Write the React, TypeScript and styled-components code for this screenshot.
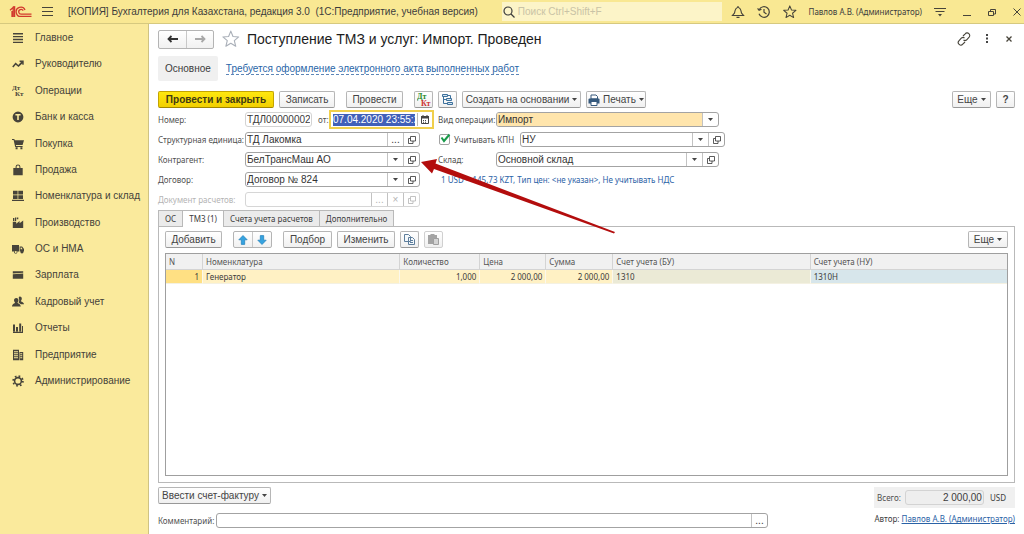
import React, { ReactNode } from "react";
import styled, { createGlobalStyle, css } from "styled-components";

const GlobalStyle = createGlobalStyle`
  *, *::before, *::after { box-sizing: border-box; }
  body {
    margin: 0;
    background: #fff;
    color: #3c3c3c;
    font-family: "Liberation Sans", Arial, sans-serif;
    font-size: 10px;
    line-height: 12px;
  }
  button, input { font: inherit; color: inherit; margin: 0; }
  button { cursor: pointer; }
`;

const small = css`
  font-family: "Noto Sans", "Liberation Sans", sans-serif;
  font-size: 8px;
`;

/* ---------- window frame ---------- */

const Page = styled.div`
  display: flex;
  flex-direction: column;
  min-height: 100vh;
`;

const TopBar = styled.header`
  display: flex;
  align-items: center;
  height: 24px;
  padding: 0 1px 0 9px;
  background: #f9e893;
  border-bottom: 1px solid #d6c97f;
`;

const AppTitle = styled.span`
  flex: none;
  margin-left: 15px;
  white-space: pre;
`;

const SearchBox = styled.label`
  display: flex;
  align-items: center;
  gap: 3px;
  flex: 1;
  min-width: 60px;
  height: 19px;
  margin: 0 9px 0 24px;
  padding-left: 1px;
  background: #fcf4c8;
`;

const SearchInput = styled.input`
  flex: 1;
  min-width: 0;
  padding: 0;
  border: 0;
  outline: 0;
  background: transparent;
  &::placeholder { color: #c9c3a6; opacity: 1; }
`;

const TopActions = styled.div`
  display: flex;
  align-items: center;
  gap: 12px;
`;

const IconButton = styled.button`
  display: flex;
  flex: none;
  padding: 0;
  border: 0;
  background: none;
  color: #47443a;
`;

const UserName = styled.span`
  ${small}
  white-space: nowrap;
`;

const WindowButtons = styled.div`
  display: flex;
  align-items: center;
  gap: 13px;
  margin-left: 3px;
`;

const Body = styled.div`
  display: flex;
  flex: 1;
`;

const Sidebar = styled.nav`
  flex: none;
  width: 149px;
  background: #faea9c;
  border-right: 1px solid #cfc383;
`;

const MenuList = styled.ul`
  display: flex;
  flex-direction: column;
  justify-content: space-between;
  min-height: 365px;
  margin: 0;
  padding: 6px 0 0;
  list-style: none;
`;

const MenuLink = styled.a`
  display: flex;
  align-items: center;
  gap: 11px;
  height: 16px;
  padding-left: 12px;
  color: #45423a;
  text-decoration: none;
  white-space: nowrap;
`;

/* ---------- document form ---------- */

const Main = styled.main`
  display: flex;
  flex: 1;
  flex-direction: column;
  min-width: 0;
  padding: 5px 9px 6px;
`;

const TitleRow = styled.div`
  display: flex;
  align-items: center;
  height: 20px;
`;

const SplitButtons = styled.div`
  display: flex;
  border: 1px solid #b4b4b4;
  border-radius: 2px;
  background: linear-gradient(#fff, #f1f1f1);
`;

const SplitHalf = styled.button<{ $w: number; $h: number }>`
  display: flex;
  align-items: center;
  justify-content: center;
  width: ${(p) => p.$w}px;
  height: ${(p) => p.$h}px;
  padding: 0;
  border: 0;
  background: none;
  & + & { border-left: 1px solid #c8c8c8; }
`;

const Title = styled.h1`
  flex: 1;
  margin: 0 0 0 7px;
  color: #1c1c1c;
  font-size: 14px;
  font-weight: 400;
  line-height: 18px;
  white-space: nowrap;
`;

const TitleTools = styled.div`
  display: flex;
  align-items: center;
  gap: 11px;
`;

const SectionTabs = styled.nav`
  display: flex;
  align-items: center;
  gap: 8px;
  margin-top: 7px;
`;

const SectionTab = styled.a`
  padding: 7px 7px 6px;
  border-radius: 2px;
  background: #f0f0f0;
  color: #3c3c3c;
  text-decoration: none;
`;

const SectionLink = styled.a`
  border-bottom: 1px dashed #5d86b8;
  color: #2a66a8;
  line-height: 11px;
  text-decoration: none;
`;

const CommandBar = styled.div`
  display: flex;
  align-items: center;
  gap: 5px;
  margin-top: 10px;
`;

const Button = styled.button<{ $primary?: boolean; $w?: number }>`
  display: inline-flex;
  align-items: center;
  justify-content: center;
  gap: 3px;
  flex: none;
  min-width: ${(p) => (p.$w ? `${p.$w}px` : "0")};
  height: 17px;
  padding: 0 ${(p) => (p.$w ? 0 : 6)}px;
  border: 1px solid ${(p) => (p.$primary ? "#c4a500" : "#b6b6b6")};
  border-bottom-color: ${(p) => (p.$primary ? "#a08600" : "#989898")};
  border-radius: 2px;
  background: ${(p) =>
    p.$primary ? "linear-gradient(#ffe80f, #f2cf00)" : "linear-gradient(#fff, #f0f0f0)"};
  color: ${(p) => (p.$primary ? "#413a12" : "#444")};
  font-weight: ${(p) => (p.$primary ? 700 : 400)};
  line-height: 14px;
  white-space: nowrap;
  &:disabled { border-color: #d0d0d0; cursor: default; }
`;

const Gap = styled.span<{ $w: number }>`
  width: ${(p) => p.$w}px;
`;

const Spacer = styled.span`
  flex: 1;
`;

const Form = styled.form`
  position: relative;
  display: grid;
  grid-template-columns: 276px 1fr;
  column-gap: 4px;
  margin-top: 4px;
`;

const FormColumn = styled.div`
  display: flex;
  flex-direction: column;
  gap: 5px;
  min-width: 0;
`;

const FormRow = styled.div`
  display: flex;
  align-items: center;
  height: 15px;
`;

const Label = styled.label<{ $w?: number; $off?: boolean }>`
  ${small}
  flex: none;
  width: ${(p) => (p.$w ? `${p.$w}px` : "auto")};
  color: ${(p) => (p.$off ? "#b4b4b4" : "#4f4f4f")};
  white-space: nowrap;
`;

const Field = styled.div<{ $w: number; $off?: boolean; $tint?: boolean }>`
  display: flex;
  flex: none;
  width: ${(p) => p.$w}px;
  height: 15px;
  overflow: hidden;
  border: 1px solid ${(p) => (p.$off ? "#d6d6d6" : "#a3a3a3")};
  border-radius: 3px;
  background: #fff;
  color: ${(p) => (p.$off ? "#b4b4b4" : "#333")};
  & > input { background: ${(p) => (p.$tint ? "#ffe5ac" : "transparent")}; }
`;

const FieldInput = styled.input<{ $right?: boolean }>`
  flex: 1;
  min-width: 0;
  padding: 1px 1px 0;
  border: 0;
  outline: 0;
  background: transparent;
  text-align: ${(p) => (p.$right ? "right" : "left")};
`;

const FieldButton = styled.button`
  display: flex;
  align-items: center;
  justify-content: center;
  flex: none;
  width: 16px;
  padding: 0;
  border: 0;
  border-left: 1px solid #c2c2c2;
  background: none;
  line-height: 8px;
`;

const ReadOnlyField = styled.div<{ $w: number; $grey?: boolean }>`
  display: flex;
  flex: none;
  width: ${(p) => p.$w}px;
  height: 15px;
  border: 1px solid #d3d3d3;
  border-radius: 3px;
  background: ${(p) => (p.$grey ? "#eee" : "#fff")};
`;

const DateField = styled.div`
  display: flex;
  align-items: center;
  flex: none;
  width: 105px;
  height: 19px;
  margin-left: auto;
  padding: 0 3px 0 2px;
  border: 2px solid #f0cf4c;
  background: #fff;
`;

const DateInput = styled.input`
  width: 82px;
  height: 12px;
  padding: 0;
  border: 0;
  outline: 0;
  background: #4160b8;
  color: #fff;
`;

const DateButton = styled.button`
  display: flex;
  flex: 1;
  align-items: center;
  justify-content: flex-end;
  height: 13px;
  margin-left: 2px;
  padding: 0;
  border: 0;
  border-left: 1px solid #b9b9b9;
  background: none;
`;

const CheckBox = styled.input`
  appearance: none;
  flex: none;
  width: 11px;
  height: 11px;
  margin: 0 4px 0 1px;
  border: 1px solid #a3a3a3;
  border-radius: 2px;
  background: #fff;
`;

const CheckWrap = styled.span`
  position: relative;
  display: flex;
  & > svg { position: absolute; left: 2px; top: -1px; pointer-events: none; }
`;

const PriceLink = styled.a`
  ${small}
  margin-left: 3px;
  color: #2a62a6;
  text-decoration: none;
  white-space: nowrap;
`;

const Pointer = styled.svg`
  position: absolute;
  left: 262px;
  top: 43px;
  pointer-events: none;
`;

/* ---------- tabs and table ---------- */

const Tabs = styled.div`
  display: flex;
  height: 16px;
  margin-top: 3px;
`;

const Tab = styled.button<{ $active?: boolean }>`
  ${small}
  position: relative;
  padding: 0 6px;
  height: ${(p) => (p.$active ? 17 : 16)}px;
  border: 1px solid #b9b9b9;
  border-bottom-width: 0;
  background: ${(p) => (p.$active ? "#fff" : "#ebebeb")};
  color: #3c3c3c;
  white-space: nowrap;
  & + & { border-left: 0; }
`;

const Panel = styled.section`
  display: flex;
  flex: 1;
  flex-direction: column;
  padding: 4px 6px 6px;
  border: 1px solid #b9b9b9;
`;

const TableBar = styled.div`
  display: flex;
  align-items: center;
  gap: 5px;
`;

const TableFrame = styled.div`
  flex: 1;
  margin-top: 5px;
  border: 1px solid #9f9f9f;
  overflow: hidden;
`;

const Grid = styled.table`
  ${small}
  width: 100%;
  border-collapse: separate;
  border-spacing: 0;
  table-layout: fixed;
`;

const HeadCell = styled.th<{ $w?: string }>`
  width: ${(p) => p.$w ?? "auto"};
  height: 16px;
  padding: 0 3px;
  background: #f1f1f1;
  border-bottom: 1px solid #d4d4d4;
  color: #555;
  font-weight: 400;
  text-align: left;
  white-space: nowrap;
  & + & { border-left: 1px solid #d4d4d4; }
`;

const Cell = styled.td<{ $bg: string; $right?: boolean }>`
  height: 14px;
  padding: 0 3px;
  border-bottom: 1px solid #f4f1e2;
  background: ${(p) => p.$bg};
  text-align: ${(p) => (p.$right ? "right" : "left")};
  & + & { border-left: 1px solid #fbf8ec; }
`;

/* ---------- footer ---------- */

const FooterRow = styled.div<{ $top: number }>`
  display: flex;
  align-items: flex-start;
  margin-top: ${(p) => p.$top}px;
`;

const Totals = styled.div`
  display: flex;
  align-items: center;
  gap: 4px;
  height: 21px;
  padding: 0 9px 0 3px;
  background: #f0f0f0;
`;

const Currency = styled.span`
  ${small}
  margin-left: 2px;
`;

const Comment = styled.div`
  display: flex;
  align-items: center;
  flex: 1;
  max-width: 610px;
`;

const CommentField = styled(Field)`
  flex: 1;
  width: auto;
`;

const Author = styled.span`
  ${small}
  margin-left: auto;
  white-space: nowrap;
`;

const AuthorLink = styled.a`
  color: #2a62a6;
`;

/* ---------- icons ---------- */

const Caret = () => (
  <svg width="5" height="3" viewBox="0 0 5 3"><path d="M0 0h5L2.5 3z" fill="#444" /></svg>
);

const OpenIcon = () => (
  <svg width="8" height="8" viewBox="0 0 8 8" fill="none" stroke="currentColor" strokeWidth=".8">
    <path d="M2.500.5h5v4.500h-5zM2.500 2.500h-2v5h4.500v-2.500" />
  </svg>
);

const Line = ({ s = 14, w = 1.2, children }: { s?: number; w?: number; children: ReactNode }) => (
  <svg width={s} height={s} viewBox={`0 0 ${s} ${s}`} fill="none" stroke="currentColor" strokeWidth={w}>
    {children}
  </svg>
);

const Arrow = ({ flip, color }: { flip?: boolean; color: string }) => (
  <svg width="11" height="8" viewBox="0 0 11 8" fill="none" stroke={color} strokeWidth="1.800">
    <path d={flip ? "M0 4h10M6.500 1l3 3-3 3" : "M11 4H1M4.500 1l-3 3 3 3"} />
  </svg>
);

const BlueArrow = ({ down }: { down?: boolean }) => (
  <svg width="10" height="10" viewBox="0 0 10 10" fill="#36a3e0" stroke="#1f7fba" strokeWidth=".7">
    <path d={down ? "M5 9.500L.8 5.200h2.500V.6h3.400v4.600h2.500z" : "M5 .5L.8 4.800h2.500v4.600h3.400V4.800h2.500z"} />
  </svg>
);

const DtKt = ({ a, b, size = 14 }: { a: string; b: string; size?: number }) => (
  <svg width={size} height={size} viewBox="0 0 14 14" fontFamily="Liberation Serif, serif" fontWeight="700" fontSize="8">
    <text x="0" y="6" fill={a}>Дт</text>
    <text x="4" y="13" fill={b}>Кт</text>
  </svg>
);

const menu: { text: string; icon: ReactNode }[] = [
  { text: "Главное", icon: <path d="M1 1h10v1.400H1zM1 3.900h10v1.400H1zM1 6.800h10v1.400H1zM1 9.700h10v1.400H1z" /> },
  { text: "Руководителю", icon: <path d="M.2 8.400L3.600 4.600l2.700 2.300L9 4H7.600V2.600h4.100v4.200h-1.400V5.400L6.500 9.100 3.700 6.700 1.400 9.400z" /> },
  {
    text: "Операции",
    icon: (
      <g fontFamily="Liberation Serif, serif" fontWeight="700" fontSize="7">
        <text x="0" y="5">Дт</text>
        <text x="3" y="11">Кт</text>
      </g>
    ),
  },
  { text: "Банк и касса", icon: <path fillRule="evenodd" d="M6 .6a5.400 5.400 0 1 0 0 10.800A5.400 5.400 0 0 0 6 .6zM3.400 3h5.200v1.500H6.800V9H5.200V4.500H3.400z" /> },
  { text: "Покупка", icon: <path d="M0 1h2.300l.5 1.200H12L10.600 7H3.900l.2.900h6.500v1H3.200L1.600 2H0zM3.600 9.300h2v2h-2zM8.400 9.300h2v2h-2z" /> },
  { text: "Продажа", icon: <path fillRule="evenodd" d="M1.300 3.900h2.300V2.800a2.400 2.400 0 0 1 4.800 0v1.100h2.300v7.300H1.300zM4.600 3.900h2.800V2.800a1.400 1.400 0 0 0-2.800 0z" /> },
  { text: "Номенклатура и склад", icon: <path d="M1 .8h4.600v3.700H1zM6.300.8H11v3.700H6.300zM1 5.200h4.600V9H1zM6.300 5.200H11V9H6.300zM0 9.800h12v1.300H0z" /> },
  { text: "Производство", icon: <path d="M.8 11V4.800h3.400v2L7.600 4v2.300L11.200 3.400V11zM1 1h1.400v3H1zM3 .6h1.200V4H3zM4.800.4h1.500v1.900H4.800z" /> },
  { text: "ОС и НМА", icon: <path d="M0 2h7v6.500H5.300a1.700 1.700 0 1 1-3.200 0H0zM7.600 3.600h2.500L12 6v2.500h-.6a1.500 1.500 0 1 1-2.900 0h-.9zM3.700 8a1 1 0 1 0 .1 0zM8.600 4.500v1.700h2L9.500 4.500z" fillRule="evenodd" /> },
  { text: "Зарплата", icon: <path d="M.8 2.200h10.400v1.500L.8 4.500zM.8 5.200L11.200 4.400v5.400H.8z" /> },
  { text: "Кадровый учет", icon: <path d="M7.800.6c1.500 0 2 1 2 2.200 0 1-.4 1.700-1 2.200 0 .8 3.200 1 3.200 3.200H8.800L6.600 6.400C7 5.800 7.500 4.600 7 3 6.500 1.600 6.800.6 7.800.6zM4.300 1.900c1.500 0 2.200 1 2.200 2.300 0 1-.4 1.800-1 2.300 0 1 3.300 1.200 3.300 4.100H0c0-2.900 3-3.100 3-4.100-.6-.5-1-1.300-1-2.300 0-1.300.8-2.300 2.300-2.300z" /> },
  { text: "Отчеты", icon: <path d="M1 2.500h2v7H1zM4 5h2v4.500H4zM7.200 1.500h2v8h-2zM1 9.800h10v1.200H1zM10 4h1v5.800h-1z" /> },
  { text: "Предприятие", icon: <path fillRule="evenodd" d="M1 .8h6v10.400H1zM2 2.200v1h4v-1zM2 4.200v1h4v-1zM2 6.200v1h4v-1zM2 8.200v1h4v-1zM7.500 3h3.700v8.200H7.500zM8.200 4.200v1h2v-1zM8.200 6.200v1h2v-1zM8.200 8.200v1h2v-1z" /> },
  {
    text: "Администрирование",
    icon: (
      <g fill="none" stroke="#47443a">
        <circle cx="6" cy="6" r="3.400" strokeWidth="1.600" />
        <circle cx="6" cy="6" r="4.900" strokeWidth="1.700" strokeDasharray="1.700 2.150" />
      </g>
    ),
  },
];

const StarPath = ({ k }: { k: number }) => (
  <path
    transform={`scale(${k})`}
    d="M8 1l2 4.900 5.200.4-4 3.400 1.300 5.100L8 12l-4.500 2.800 1.300-5.100-4-3.400 5.200-.4z"
    strokeLinejoin="round"
  />
);

/* ---------- parts with behaviour ---------- */

type LookupProps = {
  id: string;
  value: string;
  w: number;
  buttons: ("dots" | "caret" | "clear" | "open")[];
  off?: boolean;
  tint?: boolean;
};

const glyphs = {
  dots: <span>...</span>,
  caret: <Caret />,
  clear: <span>×</span>,
  open: <OpenIcon />,
};

const names = { dots: "Выбрать", caret: "Список", clear: "Очистить", open: "Открыть" };

const Lookup = ({ id, value, w, buttons, off, tint }: LookupProps) => (
  <Field $w={w} $off={off} $tint={tint}>
    <FieldInput id={id} defaultValue={value} disabled={off} />
    {buttons.map((b) => (
      <FieldButton key={b} type="button" aria-label={names[b]} disabled={off}>
        {glyphs[b]}
      </FieldButton>
    ))}
  </Field>
);

const columns: { title: string; w?: string }[] = [
  { title: "N", w: "36px" },
  { title: "Номенклатура" },
  { title: "Количество", w: "80px" },
  { title: "Цена", w: "66px" },
  { title: "Сумма", w: "67px" },
  { title: "Счет учета (БУ)" },
  { title: "Счет учета (НУ)" },
];

const rows = [["1", "Генератор", "1,000", "2 000,00", "2 000,00", "1310", "1310Н"]];
const cellColors = ["#ffe083", "#fff1c4", "#fff1c4", "#fff1c4", "#fff1c4", "#ebead6", "#d7e6eb"];
const rightAligned = [0, 2, 3, 4];

export default function App() {
  return (
    <Page>
      <GlobalStyle />
      <TopBar>
        <svg width="23" height="12" viewBox="0 0 23 12" fill="none" stroke="#d23a2e" strokeWidth="1.300">
          <path d="M1 4.200L4.200 1.500V11M3 11V5M5.600 11V.8L3.800 1.200" />
          <path d="M16 4A4.600 4.600 0 1 0 12.300 10.400H22.500" />
          <path d="M14.200 4.600A2.400 2.400 0 1 0 12.300 8.200H22.500" />
        </svg>
        <Gap $w={10} />
        <IconButton aria-label="Меню">
          <Line s={11} w={1}><path d="M0 1.500h11M0 5.500h11M0 9.500h11" /></Line>
        </IconButton>
        <AppTitle>{"[КОПИЯ] Бухгалтерия для Казахстана, редакция 3.0  (1С:Предприятие, учебная версия)"}</AppTitle>
        <SearchBox>
          <Line s={12}><circle cx="5" cy="5" r="4" /><path d="M8 8l3.500 3.500" /></Line>
          <SearchInput placeholder="Поиск Ctrl+Shift+F" aria-label="Поиск" />
        </SearchBox>
        <TopActions>
          <IconButton aria-label="Уведомления">
            <Line><path d="M1.500 10.500h11L10.500 8C10 5 9.500 2.500 7 2.500S4 5 3.500 8zM7 1v1.500M5.500 12.400h3" /></Line>
          </IconButton>
          <IconButton aria-label="История">
            <Line><path d="M2.300 4.500A5.300 5.300 0 1 1 2 8.800M.6 3.300l1.500 2 2.400-1M7 4v3.300l2.500 1.700" /></Line>
          </IconButton>
          <IconButton aria-label="Избранное">
            <Line><StarPath k={0.85} /></Line>
          </IconButton>
          <UserName>Павлов А.В. (Администратор)</UserName>
          <IconButton aria-label="Настройки">
            <Line s={12} w={1}><path d="M0 2.500h12M1.500 5.500h9" /><path d="M4 8h4l-2 2.500z" fill="currentColor" stroke="none" /></Line>
          </IconButton>
          <WindowButtons>
            <IconButton aria-label="Свернуть"><Line s={12} w={1}><path d="M2 9.500h8" /></Line></IconButton>
            <IconButton aria-label="Развернуть"><Line s={12} w={1}><path d="M2.500 5.500h5v4h-5zM4.500 5.500v-2h5v4.500h-2" /></Line></IconButton>
            <IconButton aria-label="Закрыть"><Line s={12} w={1}><path d="M2.500 2.500l7 7M9.500 2.500l-7 7" /></Line></IconButton>
          </WindowButtons>
        </TopActions>
      </TopBar>

      <Body>
        <Sidebar>
          <MenuList>
            {menu.map((m) => (
              <li key={m.text}>
                <MenuLink href="#">
                  <svg width="12" height="12" viewBox="0 0 12 12" fill="#47443a">{m.icon}</svg>
                  {m.text}
                </MenuLink>
              </li>
            ))}
          </MenuList>
        </Sidebar>

        <Main>
          <TitleRow>
            <SplitButtons>
              <SplitHalf $w={27} $h={17} aria-label="Назад"><Arrow color="#333" /></SplitHalf>
              <SplitHalf $w={27} $h={17} aria-label="Вперед"><Arrow flip color="#a8a8a8" /></SplitHalf>
            </SplitButtons>
            <Gap $w={8} />
            <IconButton aria-label="В избранное">
              <svg width="18" height="18" viewBox="0 0 18 18" fill="none" stroke="#a9afb8"><StarPath k={1.1} /></svg>
            </IconButton>
            <Title>Поступление ТМЗ и услуг: Импорт. Проведен</Title>
            <TitleTools>
              <IconButton aria-label="Ссылка">
                <Line s={14} w={1.1}>
                  <path d="M6 4l2.200-2.200a2.400 2.400 0 0 1 3.900 3.400L9.500 8A2.300 2.300 0 0 1 6.500 8M8 10l-2.200 2.200a2.400 2.400 0 0 1-3.900-3.400L4.500 6a2.300 2.300 0 0 1 3 0" />
                </Line>
              </IconButton>
              <IconButton aria-label="Еще действия">
                <svg width="10" height="12" viewBox="0 0 10 12" fill="#444"><path d="M4 1h2v2H4zM4 4.500h2v2H4zM4 8h2v2H4z" /></svg>
              </IconButton>
              <IconButton aria-label="Закрыть документ">
                <Line s={12} w={1.3}><path d="M3.500 3.500l5 5M8.500 3.500l-5 5" /></Line>
              </IconButton>
            </TitleTools>
          </TitleRow>

          <SectionTabs>
            <SectionTab href="#">Основное</SectionTab>
            <SectionLink href="#">Требуется оформление электронного акта выполненных работ</SectionLink>
          </SectionTabs>

          <CommandBar>
            <Button $primary $w={116}>Провести и закрыть</Button>
            <Button $w={56}>Записать</Button>
            <Gap $w={1} />
            <Button $w={57}>Провести</Button>
            <Gap $w={1} />
            <Button $w={19} aria-label="Проводки"><DtKt a="#2a8a2a" b="#cc3333" /></Button>
            <Button $w={19} aria-label="Структура подчиненности">
              <svg width="13" height="13" viewBox="0 0 13 13" fill="#d3e3f0" stroke="#3d719c">
                <path d="M1.500 1.500h5v2h-5zM5.500 5.500h5v2h-5zM6.500 9.500h5v2h-5z" />
                <path d="M2.500 3.500v7h4M2.500 6.500h3M6.500 2.500h3v3" fill="none" />
              </svg>
            </Button>
            <Button $w={119}>Создать на основании <Caret /></Button>
            <Button $w={60}>
              <svg width="12" height="12" viewBox="0 0 12 12">
                <path d="M3 1h5l1.500 1.500V5H3z" fill="#fff" stroke="#36597c" />
                <path d="M.5 5.500Q.5 4.500 1.500 4.500h9q1 0 1 1V9.500H.5z" fill="#36597c" />
                <path d="M3 7.500h6v4H3z" fill="#fff" stroke="#36597c" />
              </svg>
              Печать <Caret />
            </Button>
            <Spacer />
            <Button $w={39}>Еще <Caret /></Button>
            <Button $w={19} aria-label="Справка"><b>?</b></Button>
          </CommandBar>

          <Form>
            <FormColumn>
              <FormRow>
                <Label $w={87} htmlFor="number">Номер:</Label>
                <ReadOnlyField $w={67}><FieldInput id="number" readOnly value="ТДЛ00000002" /></ReadOnlyField>
                <Gap $w={6} />
                <Label htmlFor="date">от:</Label>
                <DateField>
                  <DateInput id="date" defaultValue="07.04.2020 23:55:20" />
                  <DateButton type="button" aria-label="Календарь">
                    <svg width="8" height="9" viewBox="0 0 8 9">
                      <path d="M.5 1.500h7v7h-7z" fill="#fff" stroke="#444" />
                      <path d="M0 1h8v2.500H0zM1.500 0h1v1h-1zM5.500 0h1v1h-1zM2 5h1v1H2zM4 5h1v1H4zM2 6.700h1v1H2zM4 6.700h1v1H4z" fill="#444" />
                    </svg>
                  </DateButton>
                </DateField>
              </FormRow>
              <FormRow>
                <Label $w={87} htmlFor="unit">Структурная единица:</Label>
                <Lookup id="unit" w={175} value="ТД Лакомка" buttons={["dots", "open"]} />
              </FormRow>
              <FormRow>
                <Label $w={87} htmlFor="partner">Контрагент:</Label>
                <Lookup id="partner" w={175} value="БелТрансМаш АО" buttons={["caret", "open"]} />
              </FormRow>
              <FormRow>
                <Label $w={87} htmlFor="contract">Договор:</Label>
                <Lookup id="contract" w={175} value="Договор № 824" buttons={["caret", "open"]} />
              </FormRow>
              <FormRow>
                <Label $w={87} $off htmlFor="settlement">Документ расчетов:</Label>
                <Lookup id="settlement" w={175} value="" buttons={["dots", "clear", "open"]} off />
              </FormRow>
            </FormColumn>

            <FormColumn>
              <FormRow>
                <Label $w={58} htmlFor="operation">Вид операции:</Label>
                <Lookup id="operation" w={223} value="Импорт" buttons={["caret"]} tint />
              </FormRow>
              <FormRow>
                <CheckWrap>
                  <CheckBox id="kpn" type="checkbox" defaultChecked />
                  <svg width="11" height="11" viewBox="0 0 11 11" fill="none" stroke="#189a4a" strokeWidth="2">
                    <path d="M1.500 4.500l2.500 3.500L9.500 1.500" />
                  </svg>
                </CheckWrap>
                <Label $w={66} htmlFor="kpn">Учитывать КПН</Label>
                <Lookup id="account" w={205} value="НУ" buttons={["caret", "open"]} />
              </FormRow>
              <FormRow>
                <Label $w={58} htmlFor="store">Склад:</Label>
                <Lookup id="store" w={223} value="Основной склад" buttons={["caret", "open"]} />
              </FormRow>
              <FormRow>
                <PriceLink href="#">{"1 USD = 145,73 KZT, Тип цен: <не указан>, Не учитывать НДС"}</PriceLink>
              </FormRow>
            </FormColumn>

            <Pointer width="196" height="80" viewBox="0 0 196 80" fill="#b30d0d" aria-hidden="true">
              <path d="M1 7L17 4L15.500 8.500L195 77L194 78.500L14 14L12 18.500Z" />
            </Pointer>
          </Form>

          <Tabs role="tablist">
            <Tab role="tab">ОС</Tab>
            <Tab role="tab" $active aria-selected>ТМЗ (1)</Tab>
            <Tab role="tab">Счета учета расчетов</Tab>
            <Tab role="tab">Дополнительно</Tab>
          </Tabs>

          <Panel>
            <TableBar>
              <Button $w={57}>Добавить</Button>
              <Gap $w={1} />
              <SplitButtons>
                <SplitHalf $w={18} $h={15} aria-label="Вверх"><BlueArrow /></SplitHalf>
                <SplitHalf $w={19} $h={15} aria-label="Вниз"><BlueArrow down /></SplitHalf>
              </SplitButtons>
              <Gap $w={1} />
              <Button $w={49}>Подбор</Button>
              <Button $w={58}>Изменить</Button>
              <Button $w={19} aria-label="Копировать">
                <svg width="13" height="13" viewBox="0 0 13 13" fill="#f4f8fb" stroke="#5d7d9b">
                  <path d="M1.500 1.500h4l2 2v5h-6zM5.500 4.500h4l2 2v5h-6zM7 7.500h3M7 9.500h3" />
                </svg>
              </Button>
              <Button $w={19} disabled aria-label="Вставить">
                <svg width="13" height="13" viewBox="0 0 13 13">
                  <path d="M1 2h9v9H1zM3.500 1h4v2h-4z" fill="#a4a4a4" />
                  <path d="M6.500 5.500h5v6h-5z" fill="#d4d4d4" stroke="#a0a0a0" />
                </svg>
              </Button>
              <Spacer />
              <Button $w={40}>Еще <Caret /></Button>
            </TableBar>
            <TableFrame>
              <Grid>
                <thead>
                  <tr>{columns.map((c) => <HeadCell key={c.title} $w={c.w}>{c.title}</HeadCell>)}</tr>
                </thead>
                <tbody>
                  {rows.map((r) => (
                    <tr key={r[0]}>
                      {r.map((v, i) => (
                        <Cell key={i} $bg={cellColors[i]} $right={rightAligned.includes(i)}>{v}</Cell>
                      ))}
                    </tr>
                  ))}
                </tbody>
              </Grid>
            </TableFrame>
          </Panel>

          <FooterRow $top={4}>
            <Button $w={113}>Ввести счет-фактуру <Caret /></Button>
            <Spacer />
            <Totals>
              <Label htmlFor="total">Всего:</Label>
              <ReadOnlyField $w={79} $grey><FieldInput id="total" readOnly value="2 000,00" $right /></ReadOnlyField>
              <Currency>USD</Currency>
            </Totals>
          </FooterRow>
          <FooterRow $top={5}>
            <Comment>
              <Label $w={58} htmlFor="comment">Комментарий:</Label>
              <CommentField $w={0}>
                <FieldInput id="comment" />
                <FieldButton type="button" aria-label="Открыть текст">...</FieldButton>
              </CommentField>
            </Comment>
            <Author>Автор: <AuthorLink href="#">Павлов А.В. (Администратор)</AuthorLink></Author>
          </FooterRow>
        </Main>
      </Body>
    </Page>
  );
}
